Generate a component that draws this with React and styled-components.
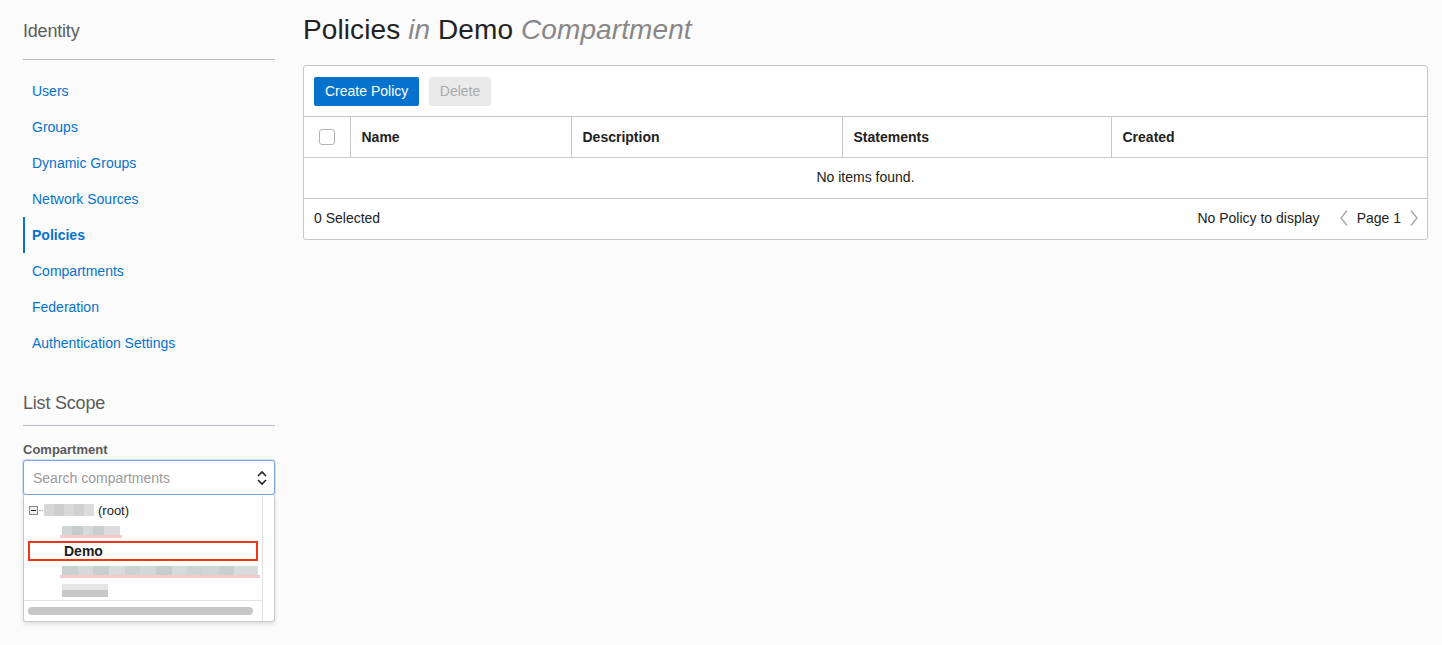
import React from "react";
import styled, { createGlobalStyle } from "styled-components";

const Global = createGlobalStyle`
  html, body { margin: 0; padding: 0; background: #fbfbfb; }
  body { font-family: "Liberation Sans", Arial, Helvetica, sans-serif; color: #333; }
  * { box-sizing: border-box; }
`;

const Page = styled.div`
  display: flex;
  gap: 28px;
  padding: 0 14px 0 23px;
  width: 1442px;
  height: 645px;
  overflow: hidden;
`;

const Sidebar = styled.aside`
  width: 252px;
  flex: none;
  display: flex;
  flex-direction: column;
`;

const SideHeading = styled.h2`
  margin: 0;
  height: ${(p) => p.$h}px;
  padding-top: ${(p) => p.$pt}px;
  font-size: 18px;
  font-weight: 300;
  color: #5c5c5c;
  line-height: 22px;
  border-bottom: 1px solid #b8bcc4;
  letter-spacing: -0.2px;
`;

const NavList = styled.nav`
  display: flex;
  flex-direction: column;
  margin-top: 13px;
`;

const NavItem = styled.a`
  display: flex;
  align-items: center;
  height: 36px;
  padding-left: ${(p) => (p.$active ? 7 : 9)}px;
  font-size: 14px;
  color: #0572ce;
  text-decoration: none;
  font-weight: ${(p) => (p.$active ? 700 : 400)};
  border-left: ${(p) => (p.$active ? "2px solid #0572ce" : "none")};
`;

const FieldLabel = styled.div`
  margin-top: 15px;
  font-size: 13px;
  font-weight: 700;
  color: #5a5a5a;
  height: 19px;
  line-height: 18px;
`;

const SelectBox = styled.div`
  height: 35px;
  border: 1px solid #7aa7e0;
  border-radius: 3px;
  box-shadow: 0 0 0 1px rgba(122, 167, 224, 0.35);
  background: #fff;
  display: flex;
  align-items: center;
  justify-content: space-between;
  padding: 0 6px 0 9px;
  font-size: 14px;
  color: #9a9a9a;
`;

const Dropdown = styled.div`
  height: 127px;
  border: 1px solid #c8c8c8;
  border-top: none;
  border-radius: 0 0 3px 3px;
  background: #fff;
  box-shadow: 0 2px 4px rgba(0, 0, 0, 0.12);
  display: grid;
  grid-template-columns: 1fr 15px;
  position: relative;
`;

const TreeArea = styled.div`
  display: flex;
  flex-direction: column;
  border-right: 1px solid #e2e2e2;
`;

const TreeRows = styled.div`
  padding-top: 5px;
  height: 106px;
  border-bottom: 1px solid #e4e4e4;
  display: flex;
  flex-direction: column;
`;

const TreeRow = styled.div`
  height: 20px;
  flex: none;
  display: flex;
  align-items: center;
  padding-left: ${(p) => p.$indent}px;
  font-size: 13px;
  color: #222;
  position: relative;
`;

const Highlight = styled.div`
  position: absolute;
  left: 4px;
  right: 4px;
  top: 1px;
  bottom: -1px;
  border: 2px solid #f0341c;
`;

const DemoText = styled.span`
  font-weight: 700;
  font-size: 14px;
  color: #1a1a1a;
  margin-top: 2px;
`;

const Toggle = styled.span`
  width: 9px;
  height: 9px;
  border: 1px solid #888;
  background: #eee;
  display: inline-flex;
  align-items: center;
  justify-content: center;
  margin-right: 1px;
  &::after {
    content: "";
    width: 5px;
    height: 1px;
    background: #222;
  }
`;

const Dots = styled.span`
  width: 4px;
  border-top: 1px dotted #aaa;
  margin-right: 1px;
`;

const Blur = styled.span`
  display: inline-block;
  width: ${(p) => p.$w}px;
  height: ${(p) => p.$h || 11}px;
  background: ${(p) => p.$bg};
  opacity: 0.85;
  position: relative;
  margin-right: 4px;
  &::after {
    content: "";
    display: ${(p) => (p.$red ? "block" : "none")};
    position: absolute;
    left: -2px;
    right: -2px;
    bottom: -3px;
    height: 3px;
    background: rgba(235, 150, 150, 0.6);
  }
`;

const HScroll = styled.div`
  flex: 1;
  display: flex;
  align-items: center;
  padding: 0 4px;
`;

const Thumb = styled.div`
  height: 8px;
  width: 225px;
  border-radius: 4px;
  background: #c6c6c6;
`;

const Main = styled.main`
  flex: 1;
  display: flex;
  flex-direction: column;
`;

const Title = styled.h1`
  margin: 0;
  padding-top: 13px;
  height: 65px;
  font-size: 28px;
  line-height: 34px;
  font-weight: 400;
  color: #222;
  letter-spacing: 0.1px;
  em { color: #888; font-style: italic; }
`;

const Panel = styled.section`
  background: #fff;
  border: 1px solid #c4c8cc;
  border-radius: 3px;
`;

const Toolbar = styled.div`
  height: 51px;
  display: flex;
  align-items: center;
  gap: 10px;
  padding: 0 10px;
  border-bottom: 1px solid #c4c8cc;
`;

const Button = styled.button`
  height: 29px;
  padding: 0 ${(p) => (p.$primary ? 11 : 10.5)}px;
  border: none;
  border-radius: 2px;
  font-family: inherit;
  font-size: 14px;
  background: ${(p) => (p.$primary ? "#0572ce" : "#eaeaea")};
  color: ${(p) => (p.$primary ? "#fff" : "#aaa")};
`;

const Table = styled.table`
  width: 100%;
  border-collapse: collapse;
  table-layout: fixed;
`;

const Th = styled.th`
  height: 40px;
  text-align: left;
  padding: 0 11px;
  font-size: 14px;
  font-weight: 700;
  color: #222;
  border-bottom: 1px solid #c4c8cc;
  border-left: ${(p) => (p.$first ? "none" : "1px solid #c4c8cc")};
`;

const EmptyCell = styled.td`
  height: 41px;
  padding-bottom: 2px;
  text-align: center;
  font-size: 14px;
  color: #222;
  border-bottom: 1px solid #c4c8cc;
`;

const Checkbox = styled.span`
  display: block;
  width: 16px;
  height: 16px;
  border: 1px solid #b0b4b8;
  border-radius: 3px;
  background: #fff;
  margin-left: 4px;
`;

const Footer = styled.div`
  height: 40px;
  padding-bottom: 2px;
  display: flex;
  align-items: center;
  justify-content: space-between;
  padding-left: 10px;
  padding-right: 5px;
  font-size: 14px;
  color: #222;
`;

const Pager = styled.div`
  display: flex;
  align-items: center;
`;

const PagerText = styled.span`
  margin: 0 ${(p) => p.$m || 0}px;
`;

const Chevron = ({ dir }) => (
  <svg width="12" height="18" viewBox="0 0 12 18" style={{ margin: "0 2px" }}>
    <polyline
      points={dir === "left" ? "9,1.5 3,9 9,16.5" : "3,1.5 9,9 3,16.5"}
      fill="none"
      stroke="#a8a8a8"
      strokeWidth="1.4"
    />
  </svg>
);

const UpDown = () => (
  <svg width="12" height="18" viewBox="0 0 12 18">
    <polyline points="2,7 6,3 10,7" fill="none" stroke="#222" strokeWidth="1.6" />
    <polyline points="2,11 6,15 10,11" fill="none" stroke="#222" strokeWidth="1.6" />
  </svg>
);

const grayA = "linear-gradient(90deg,#cfcfcf 0 20%,#c4c4c4 20% 40%,#d2d2d2 40% 60%,#c9c9c9 60% 80%,#d6d6d6 80%)";
const grayB = "linear-gradient(90deg,#c7cdcd 0 18%,#bcc4c4 18% 36%,#cfd3d3 36% 54%,#c0c6c6 54% 72%,#d5d8d8 72%)";
const grayC = "linear-gradient(90deg,#c3c9c9 0 8%,#cdd2d2 8% 16%,#bfc6c6 16% 24%,#d1d5d5 24% 32%,#c4caca 32% 40%,#ccd1d1 40% 48%,#bec5c5 48% 56%,#d0d4d4 56% 64%,#c6cccc 64% 72%,#cbd0d0 72% 80%,#c1c7c7 80% 88%,#d2d6d6 88%)";
const grayD = "linear-gradient(180deg,#e0e0e0 0 45%,#bdbdbd 45%)";

const navItems = [
  "Users",
  "Groups",
  "Dynamic Groups",
  "Network Sources",
  "Policies",
  "Compartments",
  "Federation",
  "Authentication Settings",
];

const columns = [
  { label: "Name", w: 221 },
  { label: "Description", w: 271 },
  { label: "Statements", w: 269 },
  { label: "Created", w: 316 },
];

export default function App() {
  return (
    <>
      <Global />
      <Page>
        <Sidebar>
          <SideHeading $h={60} $pt={20}>Identity</SideHeading>
          <NavList>
            {navItems.map((n) => (
              <NavItem key={n} href="#" $active={n === "Policies"}>
                {n}
              </NavItem>
            ))}
          </NavList>
          <SideHeading $h={65} $pt={31}>List Scope</SideHeading>
          <FieldLabel>Compartment</FieldLabel>
          <SelectBox>
            <span>Search compartments</span>
            <UpDown />
          </SelectBox>
          <Dropdown>
            <TreeArea>
              <TreeRows>
                <TreeRow $indent={5}>
                  <Toggle />
                  <Dots />
                  <Blur $w={50} $h={12} $bg={grayA} />
                  <span>(root)</span>
                </TreeRow>
                <TreeRow $indent={38}>
                  <Blur $w={58} $h={9} $bg={grayB} $red />
                </TreeRow>
                <TreeRow $indent={40}>
                  <Highlight />
                  <DemoText>Demo</DemoText>
                </TreeRow>
                <TreeRow $indent={38}>
                  <Blur $w={196} $h={9} $bg={grayC} $red />
                </TreeRow>
                <TreeRow $indent={38}>
                  <Blur $w={46} $h={13} $bg={grayD} />
                </TreeRow>
              </TreeRows>
              <HScroll>
                <Thumb />
              </HScroll>
            </TreeArea>
            <div />
          </Dropdown>
        </Sidebar>
        <Main>
          <Title>
            Policies <em>in</em> Demo <em>Compartment</em>
          </Title>
          <Panel>
            <Toolbar>
              <Button $primary>Create Policy</Button>
              <Button disabled>Delete</Button>
            </Toolbar>
            <Table>
              <colgroup>
                <col style={{ width: 46 }} />
                {columns.map((c) => (
                  <col key={c.label} style={{ width: c.w }} />
                ))}
              </colgroup>
              <thead>
                <tr>
                  <Th $first>
                    <Checkbox />
                  </Th>
                  {columns.map((c) => (
                    <Th key={c.label}>{c.label}</Th>
                  ))}
                </tr>
              </thead>
              <tbody>
                <tr>
                  <EmptyCell colSpan={5}>No items found.</EmptyCell>
                </tr>
              </tbody>
            </Table>
            <Footer>
              <span>0 Selected</span>
              <Pager>
                <PagerText $m={16}>No Policy to display</PagerText>
                <Chevron dir="left" />
                <PagerText $m={5}>Page 1</PagerText>
                <Chevron dir="right" />
              </Pager>
            </Footer>
          </Panel>
        </Main>
      </Page>
    </>
  );
}
